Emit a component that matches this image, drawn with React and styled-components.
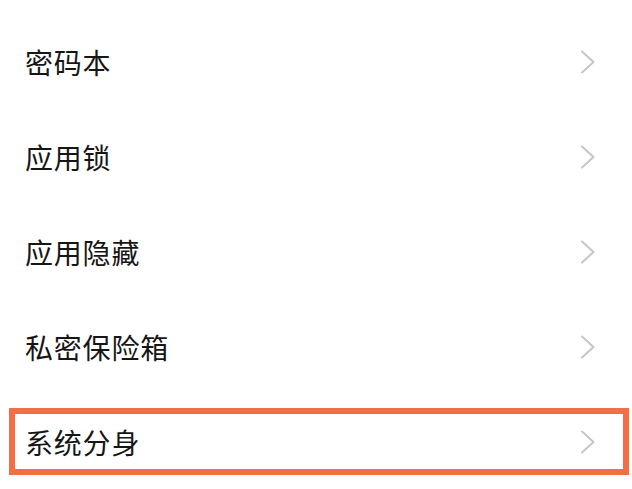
import React from 'react';
import styled, { createGlobalStyle } from 'styled-components';

const GlobalStyle = createGlobalStyle`
    html, body {
        margin: 0;
        padding: 0;
        background: #ffffff;
    }
    body {
        font-family: 'Noto Sans CJK SC', 'Noto Sans', sans-serif;
    }
`;

const StyledList = styled.ul`
    list-style: none;
    margin: 0;
    padding: 14px 0 0;
    width: 632px;
    height: 489px;
    box-sizing: border-box;
    overflow: hidden;
    background: #ffffff;
`;

const StyledRow = styled.li`
    display: flex;
    align-items: center;
    height: 95px;
`;

const StyledFrame = styled.div`
    flex: 1;
    display: flex;
    align-items: center;
    justify-content: space-between;
    height: 67px;
    box-sizing: border-box;
    margin: 0 3px 0 9px;
    padding: 0 27px 0 10px;
    border: 6px solid ${({ highlighted }) => (highlighted ? '#f46e44' : 'transparent')};
`;

const StyledLabel = styled.span`
    font-size: 28px;
    line-height: 1;
    color: #161616;
    letter-spacing: 0.8px;
`;

const StyledChevron = styled.svg`
    width: 16px;
    height: 24px;
    display: block;
`;

const Chevron = () => (
    <StyledChevron viewBox="0 0 16 24">
        <polyline
            points="2,1.5 13.5,12 2,22.5"
            fill="none"
            stroke="#c6c6c6"
            strokeWidth="2"
            strokeLinecap="round"
            strokeLinejoin="round"
        />
    </StyledChevron>
);

const items = [
    { label: '密码本' },
    { label: '应用锁' },
    { label: '应用隐藏' },
    { label: '私密保险箱' },
    { label: '系统分身', highlighted: true },
];

const App = () => (
    <>
        <GlobalStyle />
        <StyledList>
            {items.map(({ label, highlighted }) => (
                <StyledRow key={label}>
                    <StyledFrame highlighted={highlighted}>
                        <StyledLabel>{label}</StyledLabel>
                        <Chevron />
                    </StyledFrame>
                </StyledRow>
            ))}
        </StyledList>
    </>
);

export default App;
